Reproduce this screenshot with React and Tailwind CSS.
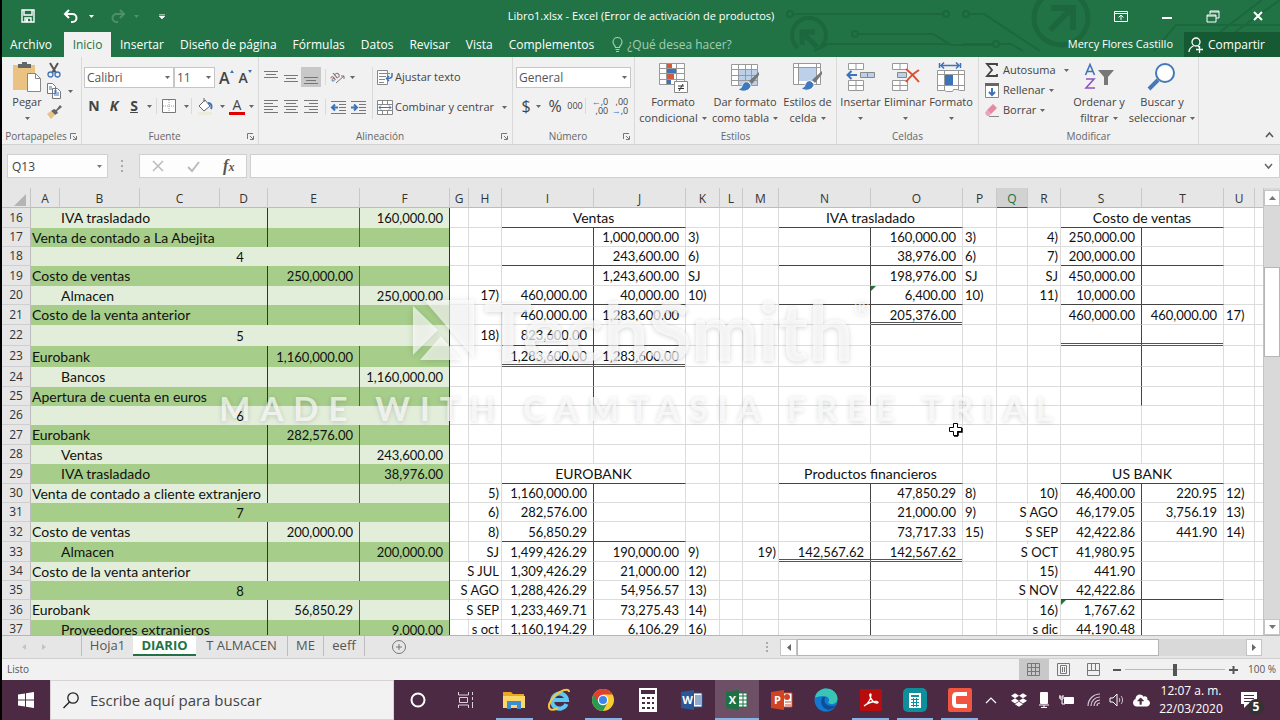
import React from 'react';
import clsx from 'clsx';
import { FaDropbox, FaCloudUploadAlt } from 'react-icons/fa';

const COLUMNS = [
  ['A', 29], ['B', 80], ['C', 80], ['D', 48], ['E', 92], ['F', 90], ['G', 19],
  ['H', 33], ['I', 92], ['J', 92], ['K', 34], ['L', 23], ['M', 36], ['N', 92],
  ['O', 92], ['P', 34], ['Q', 31], ['R', 33], ['S', 81], ['T', 82], ['U', 31],
];

const LEDGER_COLUMNS = COLUMNS.slice(6).map(([name]) => name);
const MONEY = ['E', 'F', 'I', 'J', 'N', 'O', 'S', 'T'];
const LEFT = ['K', 'P', 'U'];

// diary: seq = entry number, text = concept, sub = indented account
const ROWS = [
  { n: 16, h: 'h-5', sub: 'IVA trasladado', F: '160,000.00', titles: { I: 'Ventas', N: 'IVA trasladado', S: 'Costo de ventas' } },
  { n: 17, h: 'h-[19px]', text: 'Venta de contado a La Abejita', J: '1,000,000.00', K: '3)', O: '160,000.00', P: '3)', R: '4)', S: '250,000.00' },
  { n: 18, h: 'h-[19px]', seq: '4', J: '243,600.00', K: '6)', O: '38,976.00', P: '6)', R: '7)', S: '200,000.00' },
  { n: 19, h: 'h-5', text: 'Costo de ventas', E: '250,000.00', J: '1,243,600.00', K: 'SJ', O: '198,976.00', P: 'SJ', R: 'SJ', S: '450,000.00' },
  { n: 20, h: 'h-[19px]', sub: 'Almacen', F: '250,000.00', H: '17)', I: '460,000.00', J: '40,000.00', K: '10)', O: '6,400.00', P: '10)', R: '11)', S: '10,000.00' },
  { n: 21, h: 'h-5', text: 'Costo de la venta anterior', I: '460,000.00', J: '1,283,600.00', O: '205,376.00', S: '460,000.00', T: '460,000.00', U: '17)' },
  { n: 22, h: 'h-[21px]', seq: '5', H: '18)', I: '823,600.00' },
  { n: 23, h: 'h-[21px]', text: 'Eurobank', E: '1,160,000.00', I: '1,283,600.00', J: '1,283,600.00' },
  { n: 24, h: 'h-5', sub: 'Bancos', F: '1,160,000.00' },
  { n: 25, h: 'h-[19px]', text: 'Apertura de cuenta en euros' },
  { n: 26, h: 'h-[19px]', seq: '6' },
  { n: 27, h: 'h-5', text: 'Eurobank', E: '282,576.00' },
  { n: 28, h: 'h-[19px]', sub: 'Ventas', F: '243,600.00' },
  { n: 29, h: 'h-5', sub: 'IVA trasladado', F: '38,976.00', titles: { I: 'EUROBANK', N: 'Productos financieros', S: 'US BANK' } },
  { n: 30, h: 'h-[19px]', text: 'Venta de contado a cliente extranjero', H: '5)', I: '1,160,000.00', O: '47,850.29', P: '8)', R: '10)', S: '46,400.00', T: '220.95', U: '12)' },
  { n: 31, h: 'h-[19px]', seq: '7', H: '6)', I: '282,576.00', O: '21,000.00', P: '9)', R: 'S AGO', S: '46,179.05', T: '3,756.19', U: '13)' },
  { n: 32, h: 'h-5', text: 'Costo de ventas', E: '200,000.00', H: '8)', I: '56,850.29', O: '73,717.33', P: '15)', R: 'S SEP', S: '42,422.86', T: '441.90', U: '14)' },
  { n: 33, h: 'h-5', sub: 'Almacen', F: '200,000.00', H: 'SJ', I: '1,499,426.29', J: '190,000.00', K: '9)', M: '19)', N: '142,567.62', O: '142,567.62', R: 'S OCT', S: '41,980.95' },
  { n: 34, h: 'h-[19px]', text: 'Costo de la venta anterior', H: 'S JUL', I: '1,309,426.29', J: '21,000.00', K: '12)', R: '15)', S: '441.90' },
  { n: 35, h: 'h-[19px]', seq: '8', H: 'S AGO', I: '1,288,426.29', J: '54,956.57', K: '13)', R: 'S NOV', S: '42,422.86' },
  { n: 36, h: 'h-5', text: 'Eurobank', E: '56,850.29', H: 'S SEP', I: '1,233,469.71', J: '73,275.43', K: '14)', R: '16)', S: '1,767.62' },
  { n: 37, h: 'h-[19px]', sub: 'Proveedores extranjeros', F: '9,000.00', H: 's oct', I: '1,160,194.29', J: '6,106.29', K: '16)', R: 's dic', S: '44,190.48' },
];

const SINGLE = { I: [18, 20, 22, 32], J: [18, 20, 22, 32], N: [18, 20], O: [18, 20], S: [18, 20, 35], T: [18, 20, 35] };
const DOUBLE = { I: [23], J: [23], N: [33], O: [21, 33], S: [22], T: [22] };
const FLAGGED = ['O20', 'S36'];

const hasStem = (col, n) => ['I', 'N', 'S'].includes(col) && ((n > 16 && n < 26) || n > 29);

const Icon = ({ w = 16, h = 16, className = '', children }) => (
  <svg width={w} height={h} viewBox={`0 0 ${w} ${h}`} fill="none" aria-hidden="true" className={`shrink-0 overflow-visible ${className}`}>
    {children}
  </svg>
);

const Caret = ({ className = 'text-[#666]' }) => (
  <Icon w={5} h={3} className={className}><path d="M0 0h5L2.500 3z" fill="currentColor" /></Icon>
);

/* ---------- title bar ---------- */

const Circuit = () => (
  <svg width="500" height="52" viewBox="0 0 500 52" fill="none" stroke="#1c673d" strokeWidth="2" aria-hidden="true" className="absolute right-0 top-0">
    <circle cx="10" cy="14" r="3" /><path d="M13 14h150" /><circle cx="166" cy="14" r="3" />
    <circle cx="75" cy="34" r="3" /><path d="M78 34h75l18 11h42" /><path d="M34 51l14-7h120" />
    <path d="M18 48a17 17 0 1 1 22 0" strokeWidth="4" />
    <path d="M22 45V32h13M23 33l14 14" strokeWidth="5" />
    <path d="M189 14h15l56 37M183 44h30M219 44h12l12 7" /><circle cx="186" cy="14" r="3" /><circle cx="216" cy="44" r="3" />
    <circle cx="281" cy="18" r="27" strokeWidth="5" /><path d="M270 30l20-20M271 8h22v22" strokeWidth="6" />
    <path d="M374 51l22-26h104M440 32l42-32M455 32l45-32" />
  </svg>
);

const TitleBar = () => (
  <div className="relative flex h-8 items-center">
    <div className="flex items-center pl-[19px]">
      <button aria-label="Guardar"><Icon w={14} h={14}><path d="M1 1h12v12H1zM3 1v5h8V1M4 13V9h6v4" stroke="#fff" strokeWidth="1.400" /><path d="M5 10h2v3H5z" fill="#fff" /></Icon></button>
      <button aria-label="Deshacer" className="ml-7"><Icon w={16} h={14}><path d="M6 1L2 5l4 4M2 5h7.500a4 4 0 0 1 0 8H8" stroke="#fff" strokeWidth="2" /></Icon></button>
      <button aria-label="Opciones de deshacer" className="ml-2.5"><Caret className="text-white" /></button>
      <button aria-label="Rehacer" className="ml-4"><Icon w={16} h={14}><path d="M10 1l4 4-4 4M14 5H6.500a4 4 0 0 0 0 8H8" stroke="#4d9069" strokeWidth="2" /></Icon></button>
      <button aria-label="Opciones de rehacer" className="ml-2"><Caret className="text-[#4d9069]" /></button>
      <button aria-label="Personalizar barra" className="ml-5"><Icon w={6} h={5}><path d="M0 .500h6M0 2h6L3 5z" stroke="#fff" strokeWidth=".500" fill="#fff" /></Icon></button>
    </div>
    <h1 className="pointer-events-none absolute inset-x-0 text-center text-[11px]">Libro1.xlsx - Excel (Error de activación de productos)</h1>
    <div className="ml-auto flex">
      <button aria-label="Opciones de cinta" className="grid w-[46px] place-items-center"><Icon w={14} h={11}><path d="M.500.500h13v10H.500zM.500 2.500h13M7 9V4M4.500 6.500L7 4l2.500 2.500" stroke="#fff" /></Icon></button>
      <button aria-label="Minimizar" className="grid w-[46px] place-items-center"><Icon w={10} h={12}><path d="M0 8h10" stroke="#fff" strokeWidth="2" /></Icon></button>
      <button aria-label="Restaurar" className="grid w-[46px] place-items-center"><Icon w={14} h={13}><path d="M1 5h9v7H1zM4 4V1h9v7h-3M1 6h9M4 2h9" stroke="#fff" /></Icon></button>
      <button aria-label="Cerrar" className="grid w-11 place-items-center"><Icon w={10} h={10}><path d="M1 1l8 8M9 1L1 9" stroke="#fff" strokeWidth="2" /></Icon></button>
    </div>
  </div>
);

const TABS = ['Insertar', 'Diseño de página', 'Fórmulas', 'Datos', 'Revisar', 'Vista', 'Complementos'];

const RibbonTabs = () => (
  <div className="relative flex h-[25px] items-stretch text-xs whitespace-nowrap">
    <nav className="flex">
      <button className="w-[62px] pr-1">Archivo</button>
      <button className="mr-px w-[47px] bg-[#f1f1f1] text-[#217346]">Inicio</button>
      {TABS.map((t) => <button key={t} className="px-2">{t}</button>)}
    </nav>
    <button className="flex items-center gap-1 pl-2.5 text-[#a4cdb4]">
      <Icon w={11} h={15}><path d="M3.500 10.500c0-2-2.500-2.500-2.500-5.500a4.500 4.500 0 0 1 9 0c0 3-2.500 3.500-2.500 5.500zM3.500 12.500h4M4 14.500h3" stroke="currentColor" strokeWidth="1.200" /></Icon>
      ¿Qué desea hacer?
    </button>
    <span className="ml-auto flex items-center pr-[11px] text-[11px]">Mercy Flores Castillo</span>
    <button className="flex w-24 items-center gap-1 bg-[#165a34] pl-1">
      <Icon w={16} h={16}><circle cx="8" cy="5" r="4" stroke="#fff" strokeWidth="1.300" /><path d="M1 15c0-3.500 2-5 4.500-6M10 9l1 1M8 12.500h7M11.500 9v7" stroke="#fff" strokeWidth="1.300" /></Icon>
      Compartir
    </button>
  </div>
);

/* ---------- ribbon ---------- */

const Group = ({ label, className, launcher, children }) => (
  <section aria-label={label} className={clsx('flex shrink-0 flex-col border-r border-[#dadada]', className)}>
    <div className="flex h-[71px] pt-[3px]">{children}</div>
    <div className="flex h-4 items-center text-[10px] text-[#666]">
      <span className="flex-1 text-center">{label}</span>
      {launcher && (
        <button aria-label={`Configurar ${label}`} className="mr-1">
          <Icon w={7} h={7}><path d="M.500 6V.500H6M3 3l3 3M6.500 3v3.500H3" stroke="#777" /></Icon>
        </button>
      )}
    </div>
  </section>
);

const BigButton = ({ icon, lines, className }) => (
  <button className={clsx('flex shrink-0 flex-col items-center whitespace-nowrap', className)}>
    <span className="grid h-[34px] place-items-center">{icon}</span>
    <span className="leading-4">{lines[0]}</span>
    <span className="flex h-4 items-center gap-1 leading-4">{lines[1]}<Caret /></span>
  </button>
);

const Combo = ({ label, value, className }) => (
  <label className={clsx('relative block', className)}>
    <span className="sr-only">{label}</span>
    <select className="block h-[21px] w-full appearance-none border border-[#c6c6c6] bg-white pl-0.5 text-xs leading-[19px] text-[#555]" defaultValue={value}>
      <option>{value}</option>
    </select>
    <Caret className="pointer-events-none absolute top-[9px] right-1 text-[#666]" />
  </label>
);

const Sep = () => <span className="h-4 w-px shrink-0 bg-[#dadada]" />;

const Tool = ({ label, className = 'w-5', children }) => (
  <button aria-label={label} className={clsx('grid h-5 shrink-0 place-items-center', className)}>{children}</button>
);

const Lines = ({ rows }) => (
  <Icon w={14} h={15}>
    {rows.map(([x, y, w]) => <path key={y} d={`M${x} ${y}.500h${w}`} stroke="#777" />)}
  </Icon>
);

const Brush = ({ x = 0, y = 0 }) => (
  <g transform={`translate(${x} ${y})`}>
    <path d="M21 0L11 9l3 3 7-9z" fill="#777" />
    <path d="M10 10c-3-1-5 1-6 4-.500 2-2 3-4 3 3 3 9 3 12-1 1.500-2 1-3 0-4z" fill="#3f7abf" stroke="#fff" strokeWidth=".800" />
  </g>
);

const CondFormat = () => (
  <Icon w={30} h={31}>
    <path d="M1.500 1.500h25v21h-25zM1.500 6.500h25M1.500 11.500h25M1.500 17.500h25M8.500 1.500v21M18.500 1.500v21" fill="#fff" stroke="#999" />
    <path d="M9 2h5v4H9zM9 12h7v5H9z" fill="#d35a3c" /><path d="M9 7h9v4H9zM9 18h4v4H9z" fill="#3f73b8" />
    <path d="M16.500 19.500h13v11h-13z" fill="#fff" stroke="#888" /><path d="M20 24h6M20 26.500h6M25 22l-4 7" stroke="#333" />
  </Icon>
);

const TableFormat = () => (
  <Icon w={30} h={30}>
    <path d="M1.500 2.500h26v21h-26z" fill="#fff" /><path d="M8 8h20v16H8z" fill="#bcd0ea" />
    <path d="M1.500 2.500h26v21h-26zM1.500 7.500h26M1.500 13.500h26M1.500 18.500h26M8.500 2.500v21M15.500 2.500v21M21.500 2.500v21" stroke="#999" />
    <Brush x={8} y={10} />
  </Icon>
);

const CellStyles = () => (
  <Icon w={32} h={30}>
    <path d="M1.500 1.500h27v21h-27zM1.500 5.500h27M6.500 1.500v21M24.500 1.500v21" fill="#fff" stroke="#999" />
    <path d="M7 6h17v13H7z" fill="#bcd0ea" /><Brush x={9} y={9} />
  </Icon>
);

const InsertCells = () => (
  <Icon w={30} h={30}>
    <path d="M2.500 1.500h15v6h-15zM10 1.500v6M2.500 18.500h15v10h-15zM10 18.500v10M2.500 23.500h15" fill="#fff" stroke="#999" />
    <path d="M14.500 10.500h14v5h-14zM21.500 10.500v5" fill="#bcd0ea" stroke="#888" /><path d="M11 13H2M5.500 9L1.500 13l4 4" stroke="#3f73b8" strokeWidth="2" />
  </Icon>
);

const DeleteCells = () => (
  <Icon w={30} h={30}>
    <path d="M2.500 1.500h15v6h-15zM10 1.500v6M2.500 18.500h15v10h-15zM10 18.500v10M2.500 23.500h15" fill="#fff" stroke="#999" />
    <path d="M7.500 10.500h9v5h-9z" fill="#bcd0ea" stroke="#888" /><path d="M16 7c4 3 9 8 13 13M29 8c-5 3-10 8-13 12" stroke="#d9502f" strokeWidth="2" />
  </Icon>
);

const FormatCells = () => (
  <Icon w={30} h={31}>
    <path d="M3.500 1v5M24.500 1v5M5 3.500h18M8 .500l-3 3 3 3M20 .500l3 3-3 3" stroke="#3f73b8" strokeWidth="1.500" />
    <path d="M1.500 8.500h27v20h-5l-1-1h-5l-1 2h-6l-2-1h-7zM1.500 12.500h27M1.500 23.500h27M8.500 8.500v20M22.500 8.500v20" fill="#fff" stroke="#999" />
    <path d="M9 13h8v10H9z" fill="#3f73b8" />
  </Icon>
);

const Ribbon = () => (
  <div className="flex h-[88px] border-b border-[#d2d2d2] bg-[#f1f1f1] text-[11px] text-[#444]">
    <Group label="Portapapeles" className="w-20" launcher>
      <BigButton
        className="ml-1 w-[42px]"
        lines={['Pegar', '']}
        icon={(
          <Icon w={30} h={32}>
            <path d="M1 4h22v25H1z" fill="#eac282" /><path d="M6 3h4V1h5v2h4v4H6z" fill="#666" />
            <path d="M15.500 12.500h8l5 5v13h-13z" fill="#fff" stroke="#888" /><path d="M23.500 12.500v5h5" stroke="#888" />
          </Icon>
        )}
      />
      <div className="-ml-1 flex flex-col gap-px">
        <Tool label="Cortar"><Icon w={14} h={15}><path d="M3 0l6 10M11 0L5 10" stroke="#555" strokeWidth="2" /><circle cx="3.500" cy="11.500" r="2.500" stroke="#3f73b8" strokeWidth="1.300" /><circle cx="10.500" cy="11.500" r="2.500" stroke="#3f73b8" strokeWidth="1.300" /></Icon></Tool>
        <div className="flex items-center">
          <Tool label="Copiar"><Icon w={14} h={16}><path d="M.500.500h5l3 3v7h-8zM5.500 5.500h5l3 3v7h-8z" fill="#fff" stroke="#777" /><path d="M2 4h3M2 6h3M7 10h5M7 12h5M7 8h3" stroke="#3f73b8" /></Icon></Tool>
          <button aria-label="Opciones de copiar" className="ml-1"><Caret /></button>
        </div>
        <Tool label="Copiar formato"><Icon w={15} h={14}><path d="M15 2l-5 4 1 2-3 2-4-4 3-2 2 1 4-5z" fill="#666" /><path d="M4 6l4 4-4 4-4-5z" fill="#eac282" /></Icon></Tool>
      </div>
    </Group>

    <Group label="Fuente" className="w-[177px]" launcher>
      <div className="flex flex-col gap-2 pt-[7px] pl-0.5">
        <div className="flex items-center">
          <Combo label="Fuente" value="Calibri" className="w-[90px]" />
          <Combo label="Tamaño de fuente" value="11" className="w-[41px]" />
          <button aria-label="Aumentar tamaño" className="ml-1 flex items-start text-base leading-5 font-semibold">A<Icon w={4} h={3} className="mt-0.5"><path d="M0 3h4L2 0z" fill="#3f73b8" /></Icon></button>
          <button aria-label="Disminuir tamaño" className="ml-[5px] flex items-start text-sm leading-5 font-semibold">A<Icon w={4} h={3} className="mt-0.5"><path d="M0 0h4L2 3z" fill="#3f73b8" /></Icon></button>
        </div>
        <div className="flex items-center">
          <Tool label="Negrita"><b className="text-sm">N</b></Tool>
          <Tool label="Cursiva"><b className="text-sm italic">K</b></Tool>
          <Tool label="Subrayado"><b className="text-sm underline">S</b></Tool>
          <Tool label="Opciones de subrayado" className="w-2.5"><Caret /></Tool>
          <span className="w-0.5" />
          <Sep />
          <Tool label="Bordes" className="w-6"><Icon w={14} h={14}><path d="M.500.500h13v13H.500z" fill="#fff" stroke="#777" /><path d="M7 1v12M1 7h12" stroke="#999" strokeDasharray="1 1" /></Icon></Tool>
          <Tool label="Opciones de bordes" className="w-2.5"><Caret /></Tool>
          <Sep />
          <Tool label="Color de relleno" className="w-7"><Icon w={16} h={17}><path d="M1 8l6-6 5 6-6 5zM6 4V0" fill="#fff" stroke="#666" /><path d="M10 5c4 0 4 4 3 6" stroke="#3f73b8" strokeWidth="2" /><path d="M0 14h14v3H0z" fill="#ecebdc" /></Icon></Tool>
          <Caret />
          <Tool label="Color de fuente" className="w-6"><span className="block w-4 border-b-[3px] border-[#e00000] text-sm leading-[14px]">A</span></Tool>
          <Caret />
        </div>
      </div>
    </Group>

    <Group label="Alineación" className="w-[254px]" launcher>
      <div className="flex flex-col gap-2.5 pt-[7px] pl-0.5">
        <div className="flex items-center">
          <Tool label="Alinear arriba"><Lines rows={[[0, 1, 14], [2, 4, 10], [0, 7, 14]]} /></Tool>
          <Tool label="Alinear en medio"><Lines rows={[[0, 5, 14], [2, 8, 10], [0, 11, 14]]} /></Tool>
          <Tool label="Alinear abajo" className="w-5 bg-[#c8c8c8]"><Lines rows={[[0, 7, 14], [2, 10, 10], [0, 13, 14]]} /></Tool>
          <span className="w-1" />
          <Sep />
          <Tool label="Orientación" className="w-6"><Icon w={15} h={14}><text x="0" y="10" fontSize="9" fill="#555" transform="rotate(-40 4 9)">ab</text><path d="M5 13l8-7M13 9V6h-3" stroke="#777" /></Icon></Tool>
          <Caret />
        </div>
        <div className="flex items-center">
          <Tool label="Alinear a la izquierda"><Lines rows={[[0, 0, 14], [0, 3, 9], [0, 6, 14], [0, 9, 9], [0, 12, 14]]} /></Tool>
          <Tool label="Centrar"><Lines rows={[[0, 0, 14], [2, 3, 10], [0, 6, 14], [2, 9, 10], [0, 12, 14]]} /></Tool>
          <Tool label="Alinear a la derecha"><Lines rows={[[0, 0, 14], [5, 3, 9], [0, 6, 14], [5, 9, 9], [0, 12, 14]]} /></Tool>
          <span className="w-1" />
          <Sep />
          <Tool label="Disminuir sangría" className="ml-0.5 w-5"><Icon w={15} h={15}><path d="M0 1.500h15M8 4.500h7M8 7.500h7M8 10.500h7M0 13.500h15" stroke="#777" /><path d="M7 7.500H1M4 4.500l-3 3 3 3" stroke="#3f73b8" strokeWidth="2" /></Icon></Tool>
          <Tool label="Aumentar sangría"><Icon w={15} h={15}><path d="M0 1.500h15M8 4.500h7M8 7.500h7M8 10.500h7M0 13.500h15" stroke="#777" /><path d="M0 7.500h6M3 4.500l3 3-3 3" stroke="#3f73b8" strokeWidth="2" /></Icon></Tool>
        </div>
      </div>
      <div className="mt-[7px] ml-1 flex h-[52px] flex-col gap-2.5 border-l border-[#dadada] pl-1">
        <button className="flex h-5 items-center gap-0.5 whitespace-nowrap">
          <Icon w={16} h={15}><path d="M.500.500h10v14H.500zM2 3.500h11M2 6.500h7M2 9.500h6M2 12.500h5" fill="#fff" stroke="#888" /><path d="M15 3v3c0 2-2 2.500-5 2.500M12 6L9.500 8.500 12 11" stroke="#3f73b8" strokeWidth="1.500" /></Icon>
          Ajustar texto
        </button>
        <button className="flex h-5 items-center gap-0.5 whitespace-nowrap">
          <Icon w={16} h={15}><path d="M.500.500h15v14H.500zM.500 4.500h15M.500 10.500h15M5.500.500v4M10.500.500v4M5.500 10.500v4M10.500 10.500v4" fill="#fff" stroke="#888" /><path d="M2 7.500h12M4 5.500l-2 2 2 2M12 5.500l2 2-2 2" stroke="#3f73b8" /></Icon>
          Combinar y centrar
          <span className="ml-1.5"><Caret /></span>
        </button>
      </div>
    </Group>

    <Group label="Número" className="w-[122px]" launcher>
      <div className="flex flex-1 flex-col gap-2 px-[3px] pt-[7px]">
        <Combo label="Formato de número" value="General" className="w-full" />
        <div className="flex items-center">
          <Tool label="Moneda"><span className="text-base leading-5">$</span></Tool>
          <Caret />
          <Tool label="Porcentaje" className="ml-1 w-5"><span className="text-base leading-5">%</span></Tool>
          <Tool label="Millares" className="w-5"><span className="text-[9px]">000</span></Tool>
          <Sep />
          <Tool label="Aumentar decimales" className="ml-1 w-5"><span className="text-right text-[9px] leading-[9px]"><span className="text-[#3f73b8]">←</span>,0<br />,00</span></Tool>
          <Tool label="Disminuir decimales" className="w-5"><span className="text-right text-[9px] leading-[9px]">,00<br /><span className="text-[#3f73b8]">→</span>,0</span></Tool>
        </div>
      </div>
    </Group>

    <Group label="Estilos" className="w-[202px]">
      <BigButton className="w-[76px]" lines={['Formato', 'condicional']} icon={<CondFormat />} />
      <BigButton className="w-[68px]" lines={['Dar formato', 'como tabla']} icon={<TableFormat />} />
      <BigButton className="w-[57px]" lines={['Estilos de', 'celda']} icon={<CellStyles />} />
    </Group>

    <Group label="Celdas" className="w-[142px]">
      <BigButton className="w-[47px]" lines={['Insertar', '']} icon={<InsertCells />} />
      <BigButton className="w-[42px]" lines={['Eliminar', '']} icon={<DeleteCells />} />
      <BigButton className="w-[50px]" lines={['Formato', '']} icon={<FormatCells />} />
    </Group>

    <Group label="Modificar" className="w-[220px]">
      <div className="flex w-[88px] flex-col pl-1.5 whitespace-nowrap">
        <button className="flex h-5 items-center gap-1"><Icon w={14} h={14}><path d="M12 3V1H2l5 6-5 6h10v-2" stroke="#444" strokeWidth="1.800" /></Icon>Autosuma<span className="ml-1"><Caret /></span></button>
        <button className="flex h-5 items-center gap-1"><Icon w={14} h={15}><path d="M.500.500h13v14H.500z" fill="#fff" stroke="#888" /><path d="M0 0h14v3H0z" fill="#666" /><path d="M7 5v7M4 9l3 3 3-3" stroke="#3f73b8" strokeWidth="2" /></Icon>Rellenar<Caret /></button>
        <button className="flex h-5 items-center gap-1"><Icon w={14} h={13}><path d="M8 0l4 4-6 6-4-4z" fill="#e58aa0" /><path d="M2 6l4 4-2 2H2L0 9z" fill="#e7a5b5" /><path d="M4 12.500h10" stroke="#888" /></Icon>Borrar<Caret /></button>
      </div>
      <BigButton
        className="w-16"
        lines={['Ordenar y', 'filtrar']}
        icon={(
          <Icon w={30} h={28}>
            <path d="M1.500 12L6 1.500 10.500 12M3 8.500h6" stroke="#3f73b8" strokeWidth="1.600" /><path d="M2 16h8L2 25h9" stroke="#8d56c4" strokeWidth="1.600" />
            <path d="M14 7h16l-6 7v8h-4v-8z" fill="#777" />
          </Icon>
        )}
      />
      <BigButton
        className="w-[62px]"
        lines={['Buscar y', 'seleccionar']}
        icon={<Icon w={28} h={28}><circle cx="17" cy="10" r="9" fill="#fff" stroke="#4478b8" strokeWidth="2" /><path d="M10 17l-9 9" stroke="#4478b8" strokeWidth="4" /></Icon>}
      />
    </Group>
    <button aria-label="Contraer la cinta" className="mt-auto mr-1.5 mb-1.5 ml-auto"><Icon w={9} h={6}><path d="M1 5l3.500-4L8 5" stroke="#555" strokeWidth="1.500" /></Icon></button>
  </div>
);

const FormulaBar = () => (
  <div className="flex h-[43px] items-center pb-px pl-[5px]">
    <label className="relative">
      <span className="sr-only">Cuadro de nombres</span>
      <input defaultValue="Q13" className="block h-6 w-[101px] border border-[#d0d0d0] bg-[#fdfdfd] pl-1 text-xs text-[#444]" />
      <Caret className="absolute top-[11px] right-1.5 text-[#777]" />
    </label>
    <Icon w={2} h={12} className="mx-[13px]"><path d="M0 0h2v2H0zM0 5h2v2H0zM0 10h2v2H0z" fill="#aaa" /></Icon>
    <div className="ml-[3px] flex h-6 w-[108px] shrink-0 items-center justify-around border border-[#d0d0d0] bg-[#fdfdfd]">
      <button aria-label="Cancelar"><Icon w={12} h={12}><path d="M1 1l10 10M11 1L1 11" stroke="#bbb" strokeWidth="1.500" /></Icon></button>
      <button aria-label="Introducir"><Icon w={13} h={11}><path d="M1 6l4 4 7-9" stroke="#bbb" strokeWidth="2" /></Icon></button>
      <button aria-label="Insertar función" className="font-['Liberation_Serif',serif] text-base leading-4 font-bold text-[#555] italic">f<span className="text-xs">x</span></button>
    </div>
    <div className="ml-[3px] flex h-6 flex-1 items-center border border-[#d0d0d0] bg-[#fdfdfd]">
      <input aria-label="Barra de fórmulas" className="h-full min-w-0 flex-1 px-2 text-xs outline-none" />
      <button aria-label="Expandir barra de fórmulas" className="mr-1.5"><Icon w={9} h={6}><path d="M1 1l3.500 4L8 1" stroke="#666" strokeWidth="1.500" /></Icon></button>
    </div>
  </div>
);

/* ---------- worksheet ---------- */

const DiaryCells = ({ row }) => {
  const fill = row.n % 2 ? 'bg-[#a6cd8a]' : 'bg-[#e2eed9]';
  if (row.seq) {
    return <td colSpan={6} className={clsx('border-r border-[#333] p-0 text-center', fill)}>{row.seq}</td>;
  }
  return (
    <>
      <td colSpan={4} className={clsx('border-r border-[#333] p-0 text-sm leading-4 whitespace-nowrap', row.sub ? 'pl-[30px]' : 'pl-px', fill)}>{row.sub || row.text}</td>
      <td className={clsx('border-r border-[#555] p-0 pr-1.5 text-right', fill)}>{row.E}</td>
      <td className={clsx('border-r border-[#333] p-0 pr-1.5 text-right', fill)}>{row.F}</td>
    </>
  );
};

const LedgerCell = ({ row, col }) => {
  if (row.titles) {
    if (['J', 'O', 'T'].includes(col)) return null;
    if (row.titles[col]) {
      return <td colSpan={2} className="border-r border-b border-r-[#dcdcdc] border-b-[#444] bg-white p-0 text-center text-sm leading-4">{row.titles[col]}</td>;
    }
  }
  const single = SINGLE[col]?.includes(row.n);
  return (
    <td
      className={clsx(
        'relative border-r border-b bg-white p-0 whitespace-nowrap',
        hasStem(col, row.n) ? 'border-r-[#444]' : 'border-r-[#dcdcdc]',
        single ? 'border-b-[#444]' : 'border-b-[#dcdcdc]',
        MONEY.includes(col) ? 'pr-1.5' : 'pr-0.5',
        LEFT.includes(col) && 'pl-0.5',
      )}
    >
      {FLAGGED.includes(col + row.n) && (
        <Icon w={5} h={5} className="absolute top-0 left-0"><path d="M0 0h5L0 5z" fill="#1b7a2e" /></Icon>
      )}
      {DOUBLE[col]?.includes(row.n) && <span className="absolute inset-x-0 -bottom-px h-[3px] border-y border-[#555] bg-white" />}
      {row[col] && (
        <span className={clsx('flex', !LEFT.includes(col) && 'justify-end')}>
          <span className={clsx(row[col].startsWith('S ') && 'bg-white')}>{row[col]}</span>
        </span>
      )}
    </td>
  );
};

const Sheet = () => (
  <table className="w-full table-fixed border-separate border-spacing-0 font-[Lato,sans-serif] text-[13px] leading-4 text-[#111]">
    <colgroup>
      <col className="w-[29px]" />
      {COLUMNS.map(([name, width]) => <col key={name} style={{ width }} />)}
      <col />
    </colgroup>
    <thead>
      <tr className="h-5 font-['Open_Sans',sans-serif] text-xs text-[#333]">
        <th className="border-r border-b border-r-[#c4c4c4] border-b-[#bdbdbd] p-0">
          <Icon w={12} h={12} className="mt-1 ml-3"><path d="M12 0v12H0z" fill="#b4b4b4" /></Icon>
        </th>
        {COLUMNS.map(([name]) => (
          <th
            key={name}
            scope="col"
            className={clsx(
              'border-r border-b border-r-[#c9c9c9] p-0 pt-0.5 font-normal',
              name === 'Q' ? 'border-b-[#217346] bg-[#d2d2d2] text-[#217346]' : 'border-b-[#bdbdbd]',
            )}
          >
            {name}
          </th>
        ))}
        <th className="border-b border-b-[#bdbdbd] p-0" />
      </tr>
    </thead>
    <tbody>
      {ROWS.map((row) => (
        <tr key={row.n} className={row.h}>
          <th scope="row" className="border-r border-b border-r-[#bdbdbd] border-b-[#cfcfcf] p-0 font-['Open_Sans',sans-serif] text-xs font-normal text-[#333]">{row.n}</th>
          <DiaryCells row={row} />
          {LEDGER_COLUMNS.map((col) => <LedgerCell key={col} row={row} col={col} />)}
          <td className="border-b border-[#dcdcdc] bg-white p-0" />
        </tr>
      ))}
    </tbody>
  </table>
);

const Watermark = () => (
  <div className="pointer-events-none absolute inset-x-0 top-[102px] flex flex-col items-center text-white/70 select-none [text-shadow:0_1px_5px_rgba(0,0,0,0.16)]">
    <div className="flex items-center gap-2">
      <Icon w={64} h={64} className="drop-shadow-[0_1px_3px_rgba(0,0,0,0.2)]">
        <path d="M1 8l25 24L1 57zM12 2h50v58L37 31zM8 62l21-24 20 24z" fill="#fff" fillOpacity=".650" />
      </Icon>
      <span className="font-[Lato,sans-serif] text-[80px] leading-[80px] font-bold">TechSmith</span>
      <span className="-ml-2 self-start pt-1 text-xl">®</span>
    </div>
    <span className="mt-[18px] font-[Lato,sans-serif] text-[33px] leading-10 font-bold tracking-[10px] whitespace-nowrap">MADE WITH CAMTASIA FREE TRIAL</span>
  </div>
);

const VerticalScroll = () => (
  <div className="flex w-[17px] shrink-0 flex-col border-l border-[#c4c4c4] bg-[#d9d9d9]">
    <button aria-label="Desplazar hacia arriba" className="mt-0.5 grid h-4 place-items-center border border-[#c4c4c4] bg-white"><Icon w={7} h={4}><path d="M0 4h7L3.500 0z" fill="#777" /></Icon></button>
    <div className="mt-[61px] h-[90px] border border-[#b5b5b5] bg-white" />
    <button aria-label="Desplazar hacia abajo" className="mt-auto grid h-4 place-items-center border border-[#c4c4c4] bg-white"><Icon w={7} h={4}><path d="M0 0h7L3.500 4z" fill="#777" /></Icon></button>
  </div>
);

const SheetTabs = () => (
  <div className="flex h-[23px] shrink-0 items-stretch border-t border-[#b5b5b5] bg-[#e6e6e6] text-[13px] text-[#555]">
    <div className="flex w-[79px] items-center gap-4 pl-5">
      <button aria-label="Hoja anterior"><Icon w={4} h={6}><path d="M4 0v6L0 3z" fill="#c4c4c4" /></Icon></button>
      <button aria-label="Hoja siguiente"><Icon w={4} h={6}><path d="M0 0v6l4-3z" fill="#c4c4c4" /></Icon></button>
    </div>
    <button className="mb-0.5 w-[52px] border-l border-[#bdbdbd]">Hoja1</button>
    <button className="mb-0.5 w-[63px] border-b-2 border-[#217346] bg-white font-bold text-[#217346]">DIARIO</button>
    <button className="mb-0.5 w-[92px] border-r border-[#bdbdbd]">T ALMACEN</button>
    <button className="mb-0.5 w-9 border-r border-[#bdbdbd]">ME</button>
    <button className="mb-0.5 w-[41px] border-r border-[#bdbdbd]">eeff</button>
    <button aria-label="Hoja nueva" className="ml-[27px]"><Icon w={14} h={14}><circle cx="7" cy="7" r="6.500" stroke="#777" /><path d="M7 4v6M4 7h6" stroke="#777" /></Icon></button>
    <div className="ml-auto flex items-center pr-[18px]">
      <Icon w={2} h={10} className="mr-3"><path d="M0 0h2v2H0zM0 4h2v2H0zM0 8h2v2H0z" fill="#aaa" /></Icon>
      <div className="flex h-[17px] w-[482px] bg-[#d9d9d9]">
        <button aria-label="Desplazar a la izquierda" className="grid w-[17px] place-items-center border border-[#c4c4c4] bg-white"><Icon w={4} h={7}><path d="M4 0v7L0 3.500z" fill="#666" /></Icon></button>
        <div className="w-[362px] border border-[#b5b5b5] bg-white" />
        <button aria-label="Desplazar a la derecha" className="ml-auto grid w-4 place-items-center border border-[#c4c4c4] bg-white"><Icon w={4} h={7}><path d="M0 0v7l4-3.500z" fill="#666" /></Icon></button>
      </div>
    </div>
  </div>
);

const StatusBar = () => (
  <div className="flex h-[22px] shrink-0 items-center border-t border-[#cfcfcf] bg-[#f1f1f1] pr-1 pl-[5px] text-[10px] text-[#555]">
    <span>Listo</span>
    <button aria-label="Vista normal" className="ml-auto grid h-full w-[30px] place-items-center bg-[#c8c8c8]"><Icon w={13} h={13}><path d="M.500.500h12v12H.500zM.500 4.500h12M.500 8.500h12M4.500.500v12M8.500.500v12" stroke="#777" /></Icon></button>
    <button aria-label="Diseño de página" className="grid h-full w-[30px] place-items-center"><Icon w={13} h={13}><path d="M.500.500h12v12H.500zM3.500 2.500h6v8h-6zM5.500 4v5M7.500 4v5" stroke="#777" /></Icon></button>
    <button aria-label="Salto de página" className="grid h-full w-[30px] place-items-center"><Icon w={13} h={13}><path d="M.500.500h12v12H.500zM.500 7.500h12M4.500.500v7M8.500.500v7" stroke="#777" /></Icon></button>
    <button aria-label="Alejar" className="ml-1"><Icon w={8} h={8}><path d="M0 4h8" stroke="#555" strokeWidth="2" /></Icon></button>
    <input
      type="range"
      aria-label="Zoom"
      min="0"
      max="100"
      defaultValue="50"
      className="mx-1 h-3 w-[100px] appearance-none bg-[linear-gradient(#bbb,#bbb)] bg-[length:100%_1px] bg-center bg-no-repeat [&::-webkit-slider-thumb]:h-3 [&::-webkit-slider-thumb]:w-1 [&::-webkit-slider-thumb]:appearance-none [&::-webkit-slider-thumb]:bg-[#555]"
    />
    <button aria-label="Acercar"><Icon w={9} h={8}><path d="M0 4h9M4.500 0v8" stroke="#555" strokeWidth="2" /></Icon></button>
    <span className="ml-2.5">100 %</span>
  </div>
);

/* ---------- taskbar ---------- */

const Explorer = () => (
  <Icon w={22} h={18}><path d="M0 1h8l2 2h11v14H0z" fill="#e8a920" /><path d="M0 5h22v12H0z" fill="#fbd76a" /><path d="M4 10h14v8h-4v-4H8v4H4z" fill="#3d8ed0" /></Icon>
);
const InternetExplorer = () => (
  <Icon w={24} h={24}>
    <path d="M19.500 16a7.500 7.500 0 1 1 .500-4H7" stroke="#5cc8f5" strokeWidth="4" />
    <path d="M3 21C-1 17 7 7 13 4c5-3 9-3 9 0M3 21c2 2 6 0 8-1" stroke="#f3c73b" strokeWidth="2" />
  </Icon>
);
const Chrome = () => (
  <Icon w={22} h={22}>
    <circle cx="11" cy="11" r="11" fill="#f9cb2e" /><path d="M1.500 5.500A11 11 0 0 0 11 22l4.500-8.500L11 11z" fill="#279a55" />
    <path d="M11 5.500h9.500A11 11 0 0 0 1.500 5.500L6 13z" fill="#e0402f" /><circle cx="11" cy="11" r="5.200" fill="#fff" /><circle cx="11" cy="11" r="4" fill="#3f83ee" />
  </Icon>
);
const Calc = () => (
  <Icon w={18} h={24}><path d="M0 0h18v24H0z" fill="#fff" /><path d="M2 2h14v4H2zM3 9h3v2H3zM8 9h3v2H8zM13 9h2v2h-2zM3 14h3v2H3zM8 14h3v2H8zM13 14h2v2h-2zM3 19h3v2H3zM8 19h3v2H8zM13 19h2v2h-2z" fill="#4b2a43" /></Icon>
);
const Office = ({ letter, color, children }) => (
  <Icon w={22} h={20}>
    <path d="M12 3h9v14h-9z" fill="#fff" stroke={color} />{children}
    <path d="M0 2l13-2v20L0 18z" fill={color} /><text x="6.500" y="14" fontSize="11" fontWeight="700" textAnchor="middle" fill="#fff">{letter}</text>
  </Icon>
);
const Edge = () => (
  <Icon w={24} h={24}>
    <circle cx="12" cy="12" r="11.500" fill="#1478d0" /><path d="M1 10C2 3 8 .500 12 .500c7 0 11.500 5 11.500 10 0 4-3 5.500-6 5.500-2 0-4-1-3-2 2-3-1-6-5-6-4 0-7 1-8.500 2z" fill="#39c5b4" />
    <path d="M9 9c-3 3-3 10 5 13 4-.500 7-2.500 8.500-5-5 2-12 1-12-5 0-1.500.500-2.500 1-3z" fill="#0c4f94" />
  </Icon>
);
const Acrobat = () => (
  <Icon w={22} h={22}><path d="M0 0h22v22H0z" fill="#b90d0d" /><path d="M4 17c4-2 7-7 7-11 0-2-2-1-1 1 1 4 4 7 7 7 2 0 1-2-2-1.500-4 .500-8 2-11 4.500z" stroke="#fff" strokeWidth="1.300" /></Icon>
);
const CalcTeal = () => (
  <Icon w={24} h={24}><rect width="24" height="24" rx="5" fill="#0f8f9c" /><path d="M6 5h12v15H6z" fill="#fff" /><path d="M8 7h8v2H8z" fill="#0f8f9c" /><path d="M8 11.500h8M8 14.500h8M8 17.500h8M10.500 10v9M13.500 10v9" stroke="#0f8f9c" /></Icon>
);
const Camtasia = () => (
  <Icon w={24} h={24}><rect width="24" height="24" rx="2" fill="#f0563f" /><path d="M19 6H9c-2 0-3 1-3 3v6c0 2 1 3 3 3h10" stroke="#fff" strokeWidth="4" /></Icon>
);

const APPS = [
  { name: 'Explorador', icon: <Explorer />, open: true },
  { name: 'Internet Explorer', icon: <InternetExplorer /> },
  { name: 'Chrome', icon: <Chrome />, open: true },
  { name: 'Calculadora', icon: <Calc /> },
  { name: 'Word', icon: <Office letter="W" color="#2b5797"><path d="M14 6h6M14 8h6M14 10h6M14 12h6M14 14h6" stroke="#2b5797" /></Office> },
  { name: 'Excel', icon: <Office letter="X" color="#1e7145"><path d="M13 6h8M13 10h8M13 14h8M17 3v14" stroke="#1e7145" /></Office>, active: true },
  { name: 'PowerPoint', icon: <Office letter="P" color="#d04423"><path d="M14 12h6M14 15h6" stroke="#d04423" /><circle cx="16" cy="7" r="3" fill="#d04423" /></Office> },
  { name: 'Edge', icon: <Edge /> },
  { name: 'Acrobat', icon: <Acrobat />, open: true },
  { name: 'Calculadora científica', icon: <CalcTeal />, open: true },
  { name: 'Camtasia', icon: <Camtasia />, open: true },
];

const Taskbar = () => (
  <div className="flex h-10 shrink-0 items-stretch bg-[#4d2a44] text-white">
    <button aria-label="Inicio de Windows" className="grid w-12 place-items-center"><Icon w={16} h={16}><path d="M0 2.500l7-1v6H0zM8 1.300L16 0v7.500H8zM0 8.500h7v6l-7-1zM8 8.500h8V16l-8-1.300z" fill="#fff" /></Icon></button>
    <label className="flex w-[344px] items-center gap-[11px] border border-[#d8d2d7] bg-[#f2f2f2] pl-3 text-[#333]">
      <Icon w={16} h={17}><circle cx="10" cy="6" r="5.200" stroke="#222" strokeWidth="1.300" /><path d="M6.500 10L.500 16" stroke="#222" strokeWidth="1.500" /></Icon>
      <span className="sr-only">Buscar</span>
      <input placeholder="Escribe aquí para buscar" className="min-w-0 flex-1 bg-transparent text-[15px] outline-none placeholder:text-[#444]" />
    </label>
    <button aria-label="Cortana" className="grid w-12 place-items-center"><Icon w={16} h={16}><circle cx="8" cy="8" r="6.500" stroke="#fff" strokeWidth="2" /></Icon></button>
    <button aria-label="Vista de tareas" className="grid w-12 place-items-center"><Icon w={16} h={16}><path d="M.500 0v3h10V0M.500 16v-3h10v3M1.500 5.500h8v5h-8zM14.500 0v3M14.500 5v3M14.500 10v6" stroke="#ddd2da" /></Icon></button>
    <div className="ml-0.5 flex w-[490px]">
      {APPS.map((app) => (
        <button
          key={app.name}
          aria-label={app.name}
          className={clsx('relative grid flex-1 place-items-center', app.active && 'bg-[#6d4f66]')}
        >
          {app.icon}
          {app.open && <span className="absolute inset-x-1 bottom-0 h-0.5 bg-[#84b4e8]" />}
          {app.active && <span className="absolute inset-x-0 bottom-0 h-0.5 bg-[#84b4e8]" />}
        </button>
      ))}
    </div>
    <div className="ml-auto flex items-center">
      <div className="flex items-center gap-2">
        <Icon w={12} h={8}><path d="M1 7l5-5 5 5" stroke="#fff" strokeWidth="1.200" /></Icon>
        <FaDropbox size={16} className="ml-1.5" />
        <Icon w={14} h={16} className="ml-0.5"><rect x="3" y="0" width="8" height="12" rx="1" fill="#fff" /><path d="M2 13h10M7 13v2M4 15.500h6" stroke="#fff" /></Icon>
        <Icon w={16} h={12}><path d="M5.500 3.500h9v6h-9z" fill="#fff" stroke="#fff" /><path d="M0 3h4M1 1v4h3V1M3 5v5h3" stroke="#fff" /></Icon>
        <Icon w={14} h={14} className="ml-1"><path d="M1 13A12 12 0 0 1 13 1M4 13a9 9 0 0 1 9-9M7 13a6 6 0 0 1 6-6M10 13a3 3 0 0 1 3-3" stroke="#d5c8d2" strokeWidth="1.200" /></Icon>
        <Icon w={16} h={14}><path d="M1 5h3l4-4v12L4 9H1z" stroke="#fff" /><path d="M10 5c1 1 1 3 0 4M12 3c2 2 2 6 0 8" stroke="#d5c8d2" /></Icon>
        <FaCloudUploadAlt size={17} />
      </div>
      <time className="ml-2 w-[66px] text-center text-xs leading-[18px] whitespace-nowrap">12:07 a. m.<br />22/03/2020</time>
      <button aria-label="5 notificaciones" className="relative ml-4 w-10">
        <Icon w={18} h={18}><path d="M1 1h16v12H8l-4 4v-4H1z" fill="#fff" /><path d="M4 4.500h10M4 7.500h10M4 10.500h6" stroke="#4d2a44" /></Icon>
        <span className="absolute top-2 left-2 grid size-4 place-items-center rounded-full bg-[#333] text-xs font-bold">5</span>
      </button>
    </div>
  </div>
);

export default function App() {
  return (
    <div className="flex h-screen flex-col overflow-hidden border-l-2 border-black bg-[#e6e6e6] font-['Open_Sans','Noto_Sans',sans-serif]">
      <header className="relative shrink-0 bg-[#217346] text-white">
        <Circuit />
        <TitleBar />
        <RibbonTabs />
      </header>
      <div className="shrink-0">
        <Ribbon />
        <FormulaBar />
      </div>
      <main className="relative flex min-h-0 flex-1">
        <div className="min-w-0 flex-1 overflow-hidden">
          <Sheet />
        </div>
        <VerticalScroll />
        <Watermark />
        <Icon w={15} h={15} className="pointer-events-none absolute top-[234px] left-[946px]">
          <path d="M5.500 1.500h4v4h4v4h-4v4h-4v-4h-4v-4h4z" fill="#fff" stroke="#000" /><path d="M10 14H6M14 6v4h-4v4" stroke="#000" strokeWidth="1.500" />
        </Icon>
      </main>
      <SheetTabs />
      <StatusBar />
      <Taskbar />
    </div>
  );
}
